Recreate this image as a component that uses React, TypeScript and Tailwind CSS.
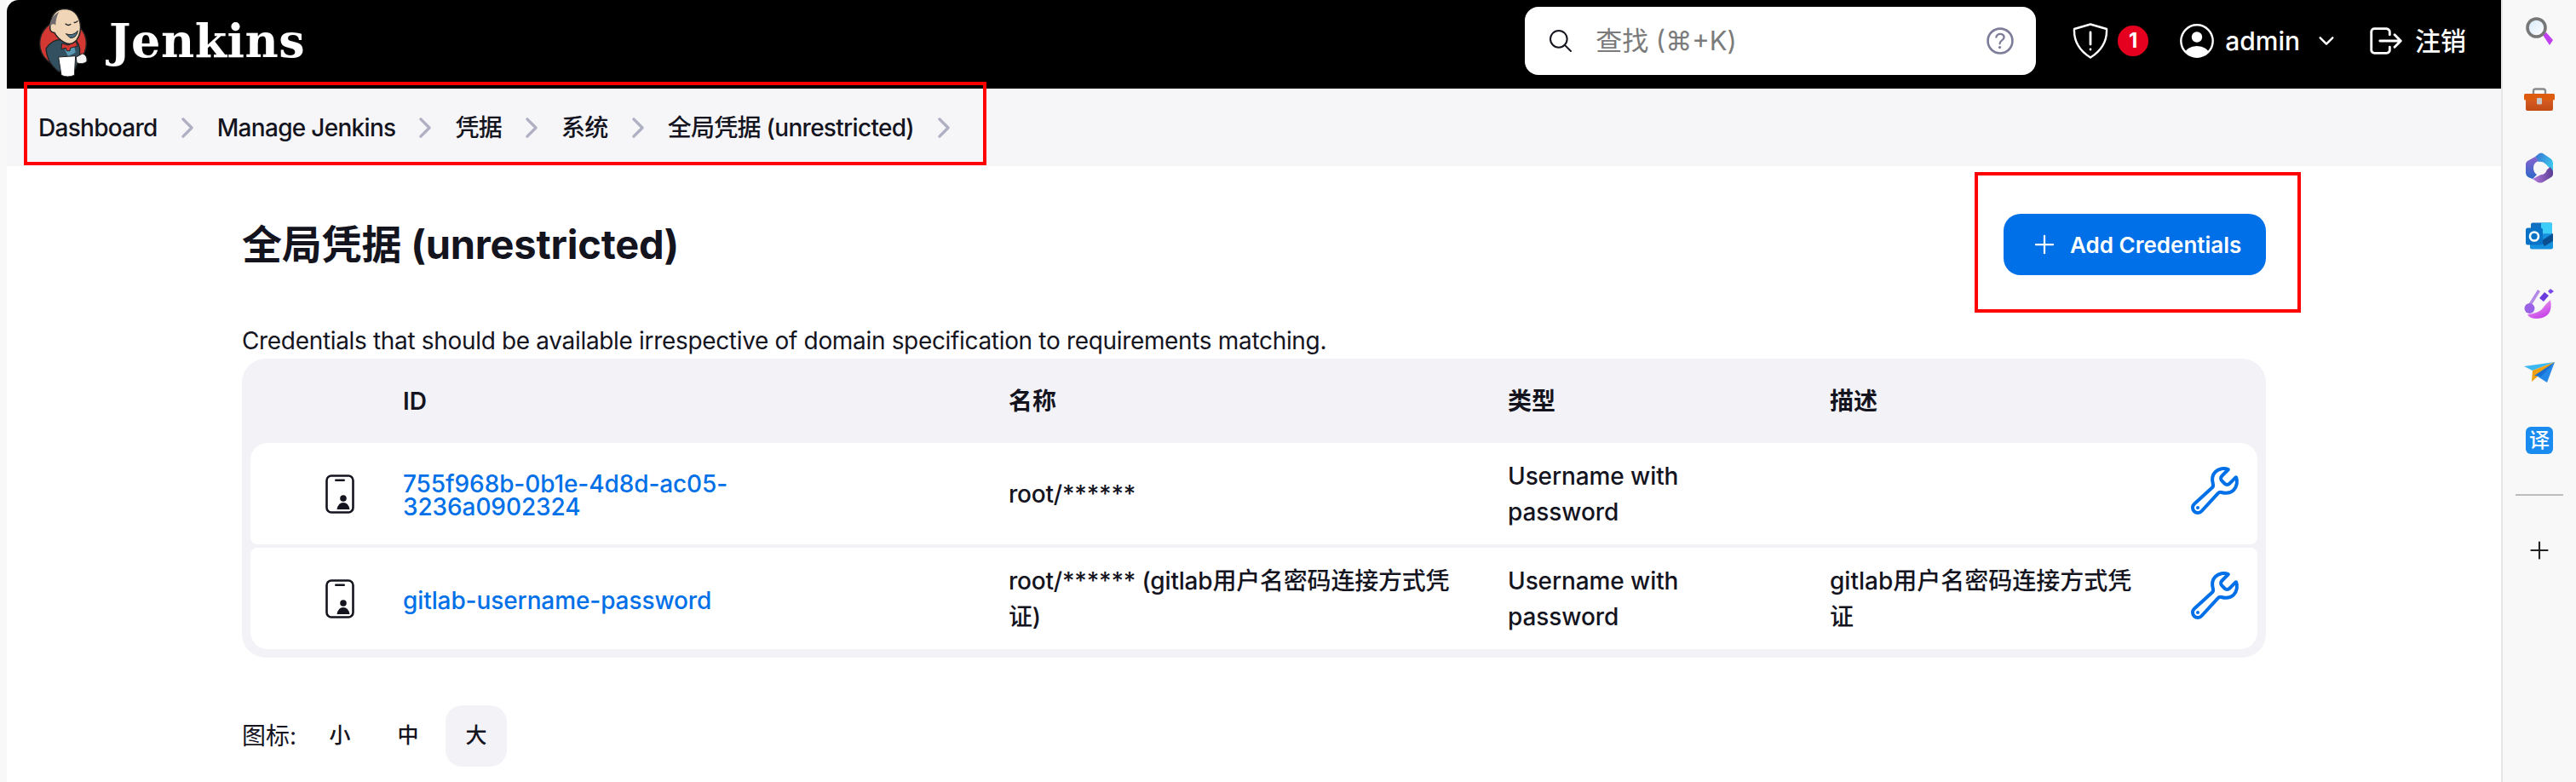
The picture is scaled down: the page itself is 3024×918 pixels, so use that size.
import {
  IoAddOutline,
  IoBuildOutline,
  IoChevronDownOutline,
  IoChevronForwardOutline,
  IoHelpCircleOutline,
  IoLogOutOutline,
  IoSearchOutline,
} from 'react-icons/io5';

const crumbs = ['Dashboard', 'Manage Jenkins', '凭据', '系统', '全局凭据 (unrestricted)'];

const rows = [
  {
    id: '755f968b-0b1e-4d8d-ac05-3236a0902324',
    name: 'root/******',
    desc: '',
    rounded: 'rounded-t-[20px] rounded-b-[8px]',
  },
  {
    id: 'gitlab-username-password',
    name: 'root/****** (gitlab用户名密码连接方式凭证)',
    desc: 'gitlab用户名密码连接方式凭证',
    rounded: 'rounded-t-[8px] rounded-b-[20px]',
  },
];

function JenkinsLogo() {
  return (
    <svg viewBox="0 0 270 285" className="w-[90px] h-[95px] shrink-0">
      <ellipse cx="132" cy="150" rx="82" ry="82" fill="#d33833" stroke="#222" strokeWidth="4" />
      <path d="M72 168 Q92 136 125 136 L180 142 Q198 165 188 205 L176 238 L118 250 Q76 220 72 168Z" fill="#335061" stroke="#222" strokeWidth="4" />
      <path d="M138 172 L170 150 L176 182 L150 196Z" fill="#5b98b4" />
      <path d="M128 150 L150 156 L178 142 L182 160 L158 166 L156 176 L145 176 L142 166 L126 170Z" fill="#d33833" stroke="#222" strokeWidth="3" />
      <path d="M88 82 Q92 30 138 28 Q182 30 192 78 Q198 112 180 138 Q160 160 136 146 Q112 132 102 112 Q80 110 88 82Z" fill="#f0d6b7" stroke="#222" strokeWidth="4" />
      <path d="M102 50 Q86 66 84 90 Q96 76 106 86 Q106 60 118 38Z" fill="#6d6b6d" />
      <path d="M140 80 Q150 90 160 82 M170 76 Q178 78 184 70" fill="none" stroke="#222" strokeWidth="4" />
      <path d="M142 116 Q165 126 184 106 Q178 134 156 130Z" fill="#49728b" stroke="#222" strokeWidth="3" />
      <path d="M116 198 L176 194 L172 262 Q148 272 126 262Z" fill="#fff" stroke="#222" strokeWidth="3" />
      <path d="M178 198 L200 186 Q218 190 216 214 Q200 226 180 218Z" fill="#f3f3f3" stroke="#222" strokeWidth="3" />
    </svg>
  );
}

function ShieldIcon() {
  return (
    <svg viewBox="0 0 42 42" className="w-[42px] h-[42px] shrink-0" fill="none" stroke="#fff" strokeWidth="2.4" strokeLinecap="round" strokeLinejoin="round">
      <path d="M21 1.5 L40 7 Q41 28 21 40.5 Q1 28 2 7Z" />
      <path d="M21 11 L21 25" strokeWidth="2.8" />
      <circle cx="21" cy="31" r="1.4" fill="#fff" stroke="none" />
    </svg>
  );
}

function PersonCircleIcon() {
  return (
    <svg viewBox="0 0 40 40" className="w-[40px] h-[40px] shrink-0">
      <defs>
        <clipPath id="personClip">
          <circle cx="20" cy="20" r="18.7" />
        </clipPath>
      </defs>
      <circle cx="20" cy="20" r="18.7" fill="none" stroke="#fff" strokeWidth="2.4" />
      <circle cx="20" cy="15.5" r="6.2" fill="#fff" />
      <ellipse cx="20" cy="35" rx="14" ry="9" fill="#fff" clipPath="url(#personClip)" />
    </svg>
  );
}

function PhonePersonIcon() {
  return (
    <svg viewBox="0 0 34 46" className="w-[34px] h-[46px] shrink-0">
      <rect x="1.5" y="1.5" width="31" height="43" rx="5.5" fill="none" stroke="#14141f" strokeWidth="2.6" />
      <rect x="11" y="5.5" width="12" height="2.6" rx="1.3" fill="#14141f" />
      <circle cx="21" cy="28" r="3.8" fill="#14141f" />
      <path d="M13.5 41 Q15 33 21 33 Q27 33 28.5 41Z" fill="#14141f" />
    </svg>
  );
}

function SearchAppIcon() {
  return (
    <svg viewBox="0 0 32 34" className="w-8 h-[34px] -mt-[6px]">
      <defs>
        <linearGradient id="lensFill" x1="0" y1="0" x2="1" y2="1">
          <stop offset="0" stopColor="#d6e9fa" />
          <stop offset="1" stopColor="#ffffff" />
        </linearGradient>
      </defs>
      <path d="M20 21 L24 18 L32 27 L28 33Z" fill="#c040f0" />
      <circle cx="12.5" cy="12.5" r="10.5" fill="url(#lensFill)" stroke="#777" strokeWidth="3.6" />
    </svg>
  );
}

function ToolboxIcon() {
  return (
    <svg viewBox="0 0 36 28" className="w-9 h-7">
      <defs>
        <linearGradient id="boxFill" x1="0" y1="0" x2="0" y2="1">
          <stop offset="0" stopColor="#e0642a" />
          <stop offset="1" stopColor="#c24a14" />
        </linearGradient>
      </defs>
      <path d="M11 8 V4 Q11 1.5 13.5 1.5 H22.5 Q25 1.5 25 4 V8" fill="none" stroke="#8b8b8b" strokeWidth="2.4" />
      <rect x="2" y="9" width="32" height="18" rx="2" fill="url(#boxFill)" />
      <rect x="0" y="7" width="36" height="7.5" rx="1.5" fill="#dd5c10" />
      <rect x="15" y="12" width="6" height="7.5" rx="1" fill="#c8c8c8" />
    </svg>
  );
}

function M365Icon() {
  return (
    <svg viewBox="0 0 32 36" className="w-8 h-9">
      <defs>
        <linearGradient id="m1" x1="0" y1="0" x2="1" y2="0.6">
          <stop offset="0" stopColor="#3d6fd0" />
          <stop offset="1" stopColor="#38c8ee" />
        </linearGradient>
        <linearGradient id="m2" x1="0" y1="0" x2="1" y2="0">
          <stop offset="0" stopColor="#b57ce0" />
          <stop offset="1" stopColor="#5a3d92" />
        </linearGradient>
        <linearGradient id="m3" x1="0" y1="0" x2="0" y2="1">
          <stop offset="0" stopColor="#8a64d0" />
          <stop offset="1" stopColor="#2a68c8" />
        </linearGradient>
      </defs>
      <path d="M11 5 L16 1 Q18 0 20 1 L29 7 Q32 9 32 12 V23 L24 14 Q20 10 15 11Z" fill="url(#m1)" />
      <path d="M32 22 V25 Q32 28 29 29.5 L20 35 Q17 36 14 35 L8 31 L18 26 Q23 26 25 20 L29 17Z" fill="url(#m2)" />
      <path d="M11 5 L3 9.5 Q0 11 0 14 V24 Q0 27 3 29 L8 31 L13 26 Q9 23 9 18 Q9 12 15 10Z" fill="url(#m3)" />
      <circle cx="16.5" cy="18" r="6.5" fill="#f7f7f7" />
    </svg>
  );
}

function OutlookIcon() {
  return (
    <svg viewBox="0 0 32 32" className="w-8 h-8">
      <rect x="6" y="0.5" width="25" height="16" rx="2" fill="#0f6fc0" />
      <rect x="18" y="0.5" width="13" height="13" rx="1" fill="#3ccdf8" />
      <path d="M5 14 L32 14 V29.5 Q32 31.5 30 31.5 H7 Q5 31.5 5 29.5Z" fill="#1490df" />
      <path d="M18 22 L32 13 V22 L22 28Z" fill="#0a4f8f" />
      <rect x="0" y="6.5" width="20" height="20" rx="2.5" fill="#0873c6" />
      <circle cx="10" cy="16.5" r="5" fill="none" stroke="#fff" strokeWidth="2.6" />
    </svg>
  );
}

function BrushIcon() {
  return (
    <svg viewBox="0 0 36 36" className="w-9 h-9">
      <defs>
        <linearGradient id="bowl" x1="0" y1="0" x2="0.6" y2="1">
          <stop offset="0" stopColor="#f3b0f0" />
          <stop offset="1" stopColor="#c640e8" />
        </linearGradient>
      </defs>
      <path d="M31 13 Q35 34 15 35 Q6 35 4 30 Q16 29 21 24 Q25 18 31 13Z" fill="url(#bowl)" />
      <path d="M16 1 L19 3 L9 19 L6 17Z" fill="#b48ae8" />
      <circle cx="6.5" cy="23" r="6" fill="#9a62e6" />
      <path d="M24 4 L29 8 L23 15 L18 11Z" fill="#6a3ce0" />
      <path d="M31 0 L35 3 L31 6 L28 3Z" fill="#7a48ea" />
    </svg>
  );
}

function SendIcon() {
  return (
    <svg viewBox="0 0 36 24" className="w-9 h-6">
      <path d="M0 5 L36 0 L10 10Z" fill="#3cb8f2" />
      <path d="M36 0 L10 10 L9 23Z" fill="#f0a010" />
      <path d="M36 0 L27 24 L16 17Z" fill="#2488e8" />
      <path d="M36 0 L12 16 L20 17Z" fill="#1670d4" />
    </svg>
  );
}

function TranslateIcon() {
  return (
    <div className="w-8 h-8 rounded-[6px] bg-[#1a8cf0] flex items-center justify-center text-white text-[24px] leading-none font-[500]">
      译
    </div>
  );
}

function Sidebar() {
  const icons = [
    <SearchAppIcon />,
    <ToolboxIcon />,
    <M365Icon />,
    <OutlookIcon />,
    <BrushIcon />,
    <SendIcon />,
    <TranslateIcon />,
  ];
  return (
    <aside className="w-[88px] shrink-0 border-l-2 border-[#e6e6e6] flex flex-col items-center">
      <div className="h-[3px]" />
      {icons.map((icon, i) => (
        <div key={i} className={`flex items-center justify-center h-[80px] ${i === 0 ? '!h-[74px]' : ''}`}>
          {icon}
        </div>
      ))}
      <div className="w-14 h-[2px] bg-[#bdbdbd] mt-[23px]" />
      <IoAddOutline className="text-[#222] text-[34px] mt-[47px]" />
    </aside>
  );
}

export default function App() {
  return (
    <div className="relative w-[3024px] h-[918px] overflow-hidden flex bg-[#f8f8f8] text-[#14141f] text-[28px] font-['Inter','Noto_Sans_CJK_SC',sans-serif]">
      <main className="ml-2 flex-1 min-w-0 bg-white">
        <header className="h-[104px] bg-black rounded-tl-[14px] flex items-center pl-[22px] pb-2 text-white">
          <JenkinsLogo />
          <span className="ml-2 text-[54px] font-bold leading-none tracking-[0.5px] font-['DejaVu_Serif',serif]">Jenkins</span>

          <div className="ml-auto w-[600px] h-20 rounded-[16px] bg-white flex items-center pl-[26px] pr-[21px] text-[#7b7b7b]">
            <IoSearchOutline className="text-[#14141f] text-[32px]" />
            <span className="ml-[25px] text-[31px]">查找 (⌘+K)</span>
            <IoHelpCircleOutline className="ml-auto text-[#7d7d9a] text-[42px]" />
          </div>

          <div className="ml-[43px] mr-[41px] flex items-center text-[30px] font-medium">
            <ShieldIcon />
            <span className="ml-[11px] w-9 h-9 rounded-full bg-[#e6001f] flex items-center justify-center text-[24px] font-bold">1</span>
            <div className="ml-[37px]"><PersonCircleIcon /></div>
            <span className="ml-[13px]">admin</span>
            <IoChevronDownOutline className="ml-[18px] text-[26px]" />
            <IoLogOutOutline className="ml-[34px] text-[46px]" />
            <span className="ml-[11px]">注销</span>
          </div>
        </header>

        <nav className="h-[91px] bg-[#f6f6f8] flex items-center pl-[37px] tracking-[-0.7px]">
          {crumbs.map((c) => (
            <div key={c} className="flex items-center font-medium">
              <span>{c}</span>
              <IoChevronForwardOutline className="mx-[17px] text-[#b0b0c4] text-[36px]" />
            </div>
          ))}
        </nav>

        <div className="px-[276px] pt-14">
          <div className="h-[72px] flex items-center justify-between">
            <h1 className="text-[47px] font-bold tracking-[-0.2px]">全局凭据 (unrestricted)</h1>
            <button className="w-[308px] h-[72px] rounded-[20px] bg-[#0070e8] text-white text-[26px] font-semibold flex items-center pl-[30px]">
              <IoAddOutline className="text-[36px]" />
              <span className="ml-[12px]">Add Credentials</span>
            </button>
          </div>

          <p className="mt-14 leading-[42px] tracking-[-0.33px]">
            Credentials that should be available irrespective of domain specification to requirements matching.
          </p>

          <div className="rounded-[28px] bg-[#f2f2f7] px-[10px] pb-[10px]">
            <div className="h-[99px] grid grid-cols-[179px_711px_586px_378px_1fr] items-center font-semibold">
              <span />
              <span>ID</span>
              <span>名称</span>
              <span>类型</span>
              <span>描述</span>
            </div>
            <div className="flex flex-col gap-1">
              {rows.map((r) => (
                <div key={r.id} className={`h-[119px] bg-white grid grid-cols-[179px_711px_586px_378px_1fr_76px] items-center ${r.rounded}`}>
                  <div className="flex justify-center pl-[30px]">
                    <PhonePersonIcon />
                  </div>
                  <a className="max-w-[440px] mt-[5px] leading-[27px] tracking-[-0.1px] text-[#0070e8] font-medium break-words">{r.id}</a>
                  <span className="max-w-[540px] font-medium leading-[42px] tracking-[-0.2px]">{r.name}</span>
                  <span className="max-w-[240px] font-medium leading-[42px] tracking-[-0.1px]">Username with password</span>
                  <span className="max-w-[370px] font-medium leading-[42px]">{r.desc}</span>
                  <IoBuildOutline className="text-[#0070e8] text-[64px] -ml-[6px] -mt-2" />
                </div>
              ))}
            </div>
          </div>

          <div className="mt-14 flex items-center">
            <span className="w-[79px]">图标:</span>
            <div className="flex gap-2 text-[25px] font-medium">
              <span className="w-[72px] h-[72px] rounded-[20px] flex items-center justify-center">小</span>
              <span className="w-[72px] h-[72px] rounded-[20px] flex items-center justify-center">中</span>
              <span className="w-[72px] h-[72px] rounded-[20px] bg-[#f2f2f7] flex items-center justify-center">大</span>
            </div>
          </div>
        </div>
      </main>

      <Sidebar />

      {/* annotation boxes drawn on top of the screenshot */}
      <div className="absolute left-[28px] top-[96px] w-[1130px] h-[98px] border-4 border-[#ff0000]" />
      <div className="absolute left-[2318px] top-[202px] w-[383px] h-[165px] border-4 border-[#ff0000]" />
    </div>
  );
}
